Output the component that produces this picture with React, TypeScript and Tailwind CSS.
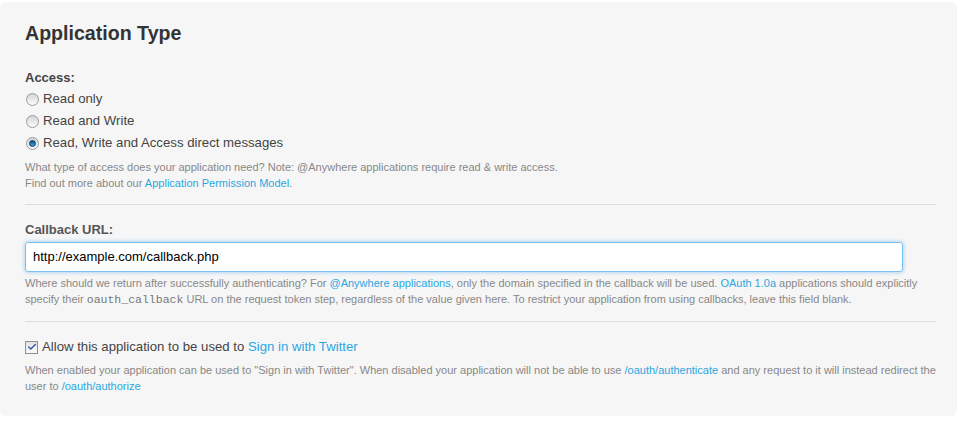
import { Check } from "lucide-react";

const Radio = ({ checked, label }: { checked?: boolean; label: string }) => (
  <label className="flex items-center h-[22px] text-[13.2px] text-[#444]">
    <span className="w-[13px] h-[13px] ml-[1px] mr-[4px] rounded-full border border-[#9a9a9a] bg-gradient-to-b from-[#d6d6d6] to-[#fbfbfb] flex items-center justify-center">
      {checked && (
        <span className="w-[7px] h-[7px] rounded-full bg-gradient-to-b from-[#0b4f86] to-[#3aa7e6] border border-[#0a3a62]" />
      )}
    </span>
    {label}
  </label>
);

const Link = ({ children }: { children: React.ReactNode }) => (
  <a className="text-[#2ba6e1] no-underline">{children}</a>
);

export default function App() {
  return (
    <div className="w-[961px] h-[425px] bg-white pt-[2px] pr-[4px]" style={{ fontFamily: '"Liberation Sans", Arial, sans-serif' }}>
      <div className="h-[414px] bg-[#f6f6f6] rounded-[6px] pl-[25px] pr-[21px] pt-[19px]">
        <h2 className="text-[19.6px] font-bold text-[#333] leading-[24px]">Application Type</h2>

        <div className="mt-[23px]">
          <div className="text-[13px] font-bold text-[#444] leading-[20px]">Access:</div>
          <div className="flex flex-col">
            <Radio label="Read only" />
            <Radio label="Read and Write" />
            <Radio checked label="Read, Write and Access direct messages" />
          </div>
          <p className="mt-[5px] text-[11px] leading-[16px] text-[#888]">
            What type of access does your application need? Note: @Anywhere applications require read &amp; write access.
            <br />
            Find out more about our <Link>Application Permission Model</Link>.
          </p>
        </div>

        <div className="mt-[13px] border-t border-[#dddddd]" />

        <div className="mt-[15px]">
          <div className="text-[13px] font-bold text-[#555] leading-[20px]">Callback URL:</div>
          <div className="mt-[2px] w-[878px] h-[30px] bg-white border border-[#7cc0f2] rounded-[3px] shadow-[0_0_4px_rgba(82,168,236,0.6)] flex items-center px-[7px] text-[13px] text-black">
            http://example.com/callback.php
          </div>
          <p className="mt-[3px] text-[11px] leading-[16px] text-[#888]">
            Where should we return after successfully authenticating? For <Link>@Anywhere applications</Link>, only the domain specified in the callback will be used. <Link>OAuth 1.0a</Link> applications should explicitly specify their <code className="text-[11.5px] text-[#777] font-normal" style={{ fontFamily: '"Liberation Mono", "Courier New", monospace' }}>oauth_callback</code> URL on the request token step, regardless of the value given here. To restrict your application from using callbacks, leave this field blank.
          </p>
        </div>

        <div className="mt-[13px] border-t border-[#dddddd]" />

        <div className="mt-[15px]">
          <label className="flex items-center h-[20px] text-[13.2px] text-[#444]">
            <span className="w-[13px] h-[13px] mr-[4px] border border-[#8f8f8f] bg-gradient-to-b from-[#e2e2e2] to-[#fafafa] flex items-center justify-center">
              <Check className="w-[10px] h-[10px] text-[#3a55a8]" strokeWidth={3.5} />
            </span>
            Allow this application to be used to&nbsp;<Link>Sign in with Twitter</Link>
          </label>
          <p className="mt-[5px] text-[11px] leading-[16px] text-[#888]">
            When enabled your application can be used to "Sign in with Twitter". When disabled your application will not be able to use <Link>/oauth/authenticate</Link> and any request to it will instead redirect the user to <Link>/oauth/authorize</Link>
          </p>
        </div>
      </div>
    </div>
  );
}
